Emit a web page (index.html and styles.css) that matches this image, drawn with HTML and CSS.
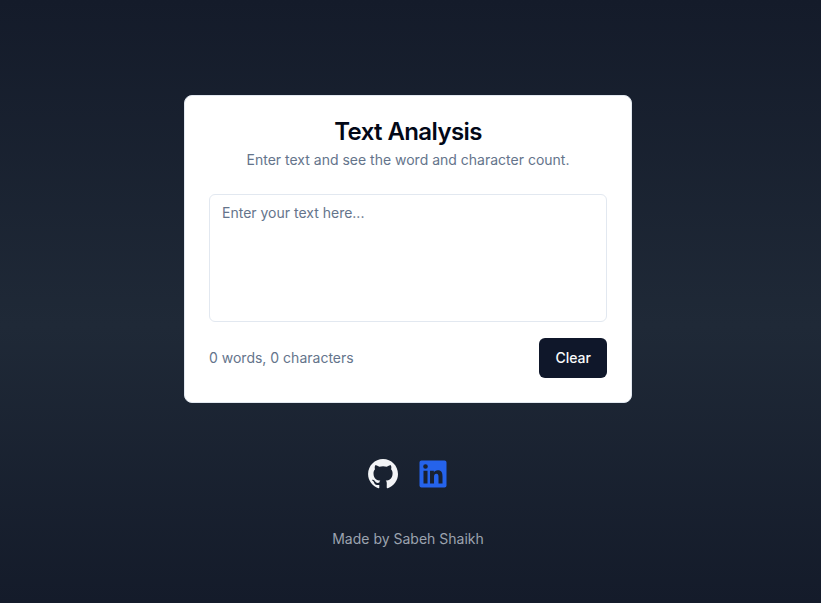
FILE: index.html
```html
<!DOCTYPE html>
<html lang="en">
<head>
<meta charset="utf-8">
<meta name="viewport" content="width=device-width, initial-scale=1">
<title>Text Analysis</title>
<link rel="stylesheet" href="styles.css">
</head>
<body>
<div class="page">
  <main class="card">
    <header class="card-header">
      <h1 class="title">Text Analysis</h1>
      <p class="muted" id="description">Enter text and see the word and character count.</p>
    </header>
    <textarea class="text-input" aria-label="Text" aria-describedby="description" placeholder="Enter your text here..."></textarea>
    <div class="card-footer">
      <p class="muted">0 words, 0 characters</p>
      <button class="clear" type="button">Clear</button>
    </div>
  </main>
  <footer class="footer">
    <nav class="links">
      <a class="github" href="#" aria-label="GitHub">
        <svg viewBox="0 0 24 24" fill="currentColor"><path d="M12.026 2c-5.509 0-9.974 4.465-9.974 9.974 0 4.406 2.857 8.145 6.821 9.465.499.09.679-.217.679-.481 0-.237-.008-.865-.011-1.696-2.775.602-3.361-1.338-3.361-1.338-.452-1.152-1.107-1.459-1.107-1.459-.905-.619.069-.605.069-.605 1.002.07 1.527 1.028 1.527 1.028.89 1.524 2.336 1.084 2.902.829.091-.645.351-1.085.635-1.334-2.214-.251-4.542-1.107-4.542-4.93 0-1.087.389-1.979 1.024-2.675-.101-.253-.446-1.268.099-2.640 0 0 .837-.269 2.742 1.021a9.582 9.582 0 0 1 2.496-.336 9.554 9.554 0 0 1 2.496.336c1.906-1.291 2.742-1.021 2.742-1.021.545 1.372.203 2.387.099 2.640.64.696 1.024 1.587 1.024 2.675 0 3.833-2.330 4.675-4.552 4.922.355.308.675.916.675 1.846 0 1.334-.012 2.410-.012 2.737 0 .267.178.577.687.479C19.146 20.115 22 16.379 22 11.974 22 6.465 17.535 2 12.026 2z"/></svg>
      </a>
      <a class="linkedin" href="#" aria-label="LinkedIn">
        <svg viewBox="0 0 24 24" fill="currentColor"><path d="M18.336 18.339h-2.665v-4.177c0-.996-.02-2.278-1.389-2.278-1.390 0-1.602 1.084-1.602 2.205v4.250h-2.666V9.750h2.561v1.171h.034c.358-.675 1.228-1.388 2.528-1.388 2.700 0 3.200 1.778 3.200 4.092v4.714zM7.004 8.575a1.548 1.548 0 1 1 0-3.096 1.548 1.548 0 0 1 0 3.096zM8.340 18.339H5.666V9.750H8.340v8.589zM19.670 3H4.330C3.595 3 3 3.580 3 4.297v15.406C3 20.420 3.595 21 4.330 21h15.340c.734 0 1.330-.580 1.330-1.297V4.297C21 3.580 20.404 3 19.670 3z"/></svg>
      </a>
    </nav>
    <p class="credit">Made by Sabeh Shaikh</p>
  </footer>
</div>
</body>
</html>
```

FILE: styles.css
```css
* {
  box-sizing: border-box;
}

body {
  margin: 0;
  font-family: Inter, sans-serif;
  font-size: 14px;
  line-height: 20px;
}

h1,
p {
  margin: 0;
}

.page {
  min-height: 100vh;
  padding: 89px 24px 48px 19px;
  display: flex;
  flex-direction: column;
  align-items: center;
  justify-content: center;
  gap: 53px;
  background: linear-gradient(#141b2a, #1f2937 54%, #141b2a);
}

.card {
  width: 100%;
  max-width: 448px;
  padding: 24px;
  border: 1px solid #e2e8f0;
  border-radius: 8px;
  background: #ffffff;
  color: #020817;
}

.card-header {
  display: flex;
  flex-direction: column;
  gap: 6px;
  margin-bottom: 24px;
  text-align: center;
}

.title {
  font-size: 24px;
  line-height: 24px;
  font-weight: 600;
  letter-spacing: -0.025em;
}

.muted {
  color: #64748b;
}

.text-input {
  display: block;
  width: 100%;
  height: 128px;
  padding: 8px 12px;
  border: 1px solid #e2e8f0;
  border-radius: 6px;
  background: #ffffff;
  color: #020817;
  font: inherit;
  resize: none;
}

.text-input::placeholder {
  color: #64748b;
}

.card-footer {
  display: flex;
  align-items: center;
  justify-content: space-between;
  margin-top: 16px;
}

.clear {
  height: 40px;
  padding: 8px 16px;
  border: 0;
  border-radius: 6px;
  background: #0f172a;
  color: #f8fafc;
  font: inherit;
  font-weight: 500;
}

.footer {
  display: flex;
  flex-direction: column;
  align-items: center;
  gap: 37px;
}

.links {
  display: flex;
  gap: 14px;
}

.links svg {
  display: block;
  width: 36px;
  height: 36px;
}

.github {
  color: #f3f4f6;
}

.linkedin {
  color: #2563eb;
}

.credit {
  color: #9ca3af;
}
```
